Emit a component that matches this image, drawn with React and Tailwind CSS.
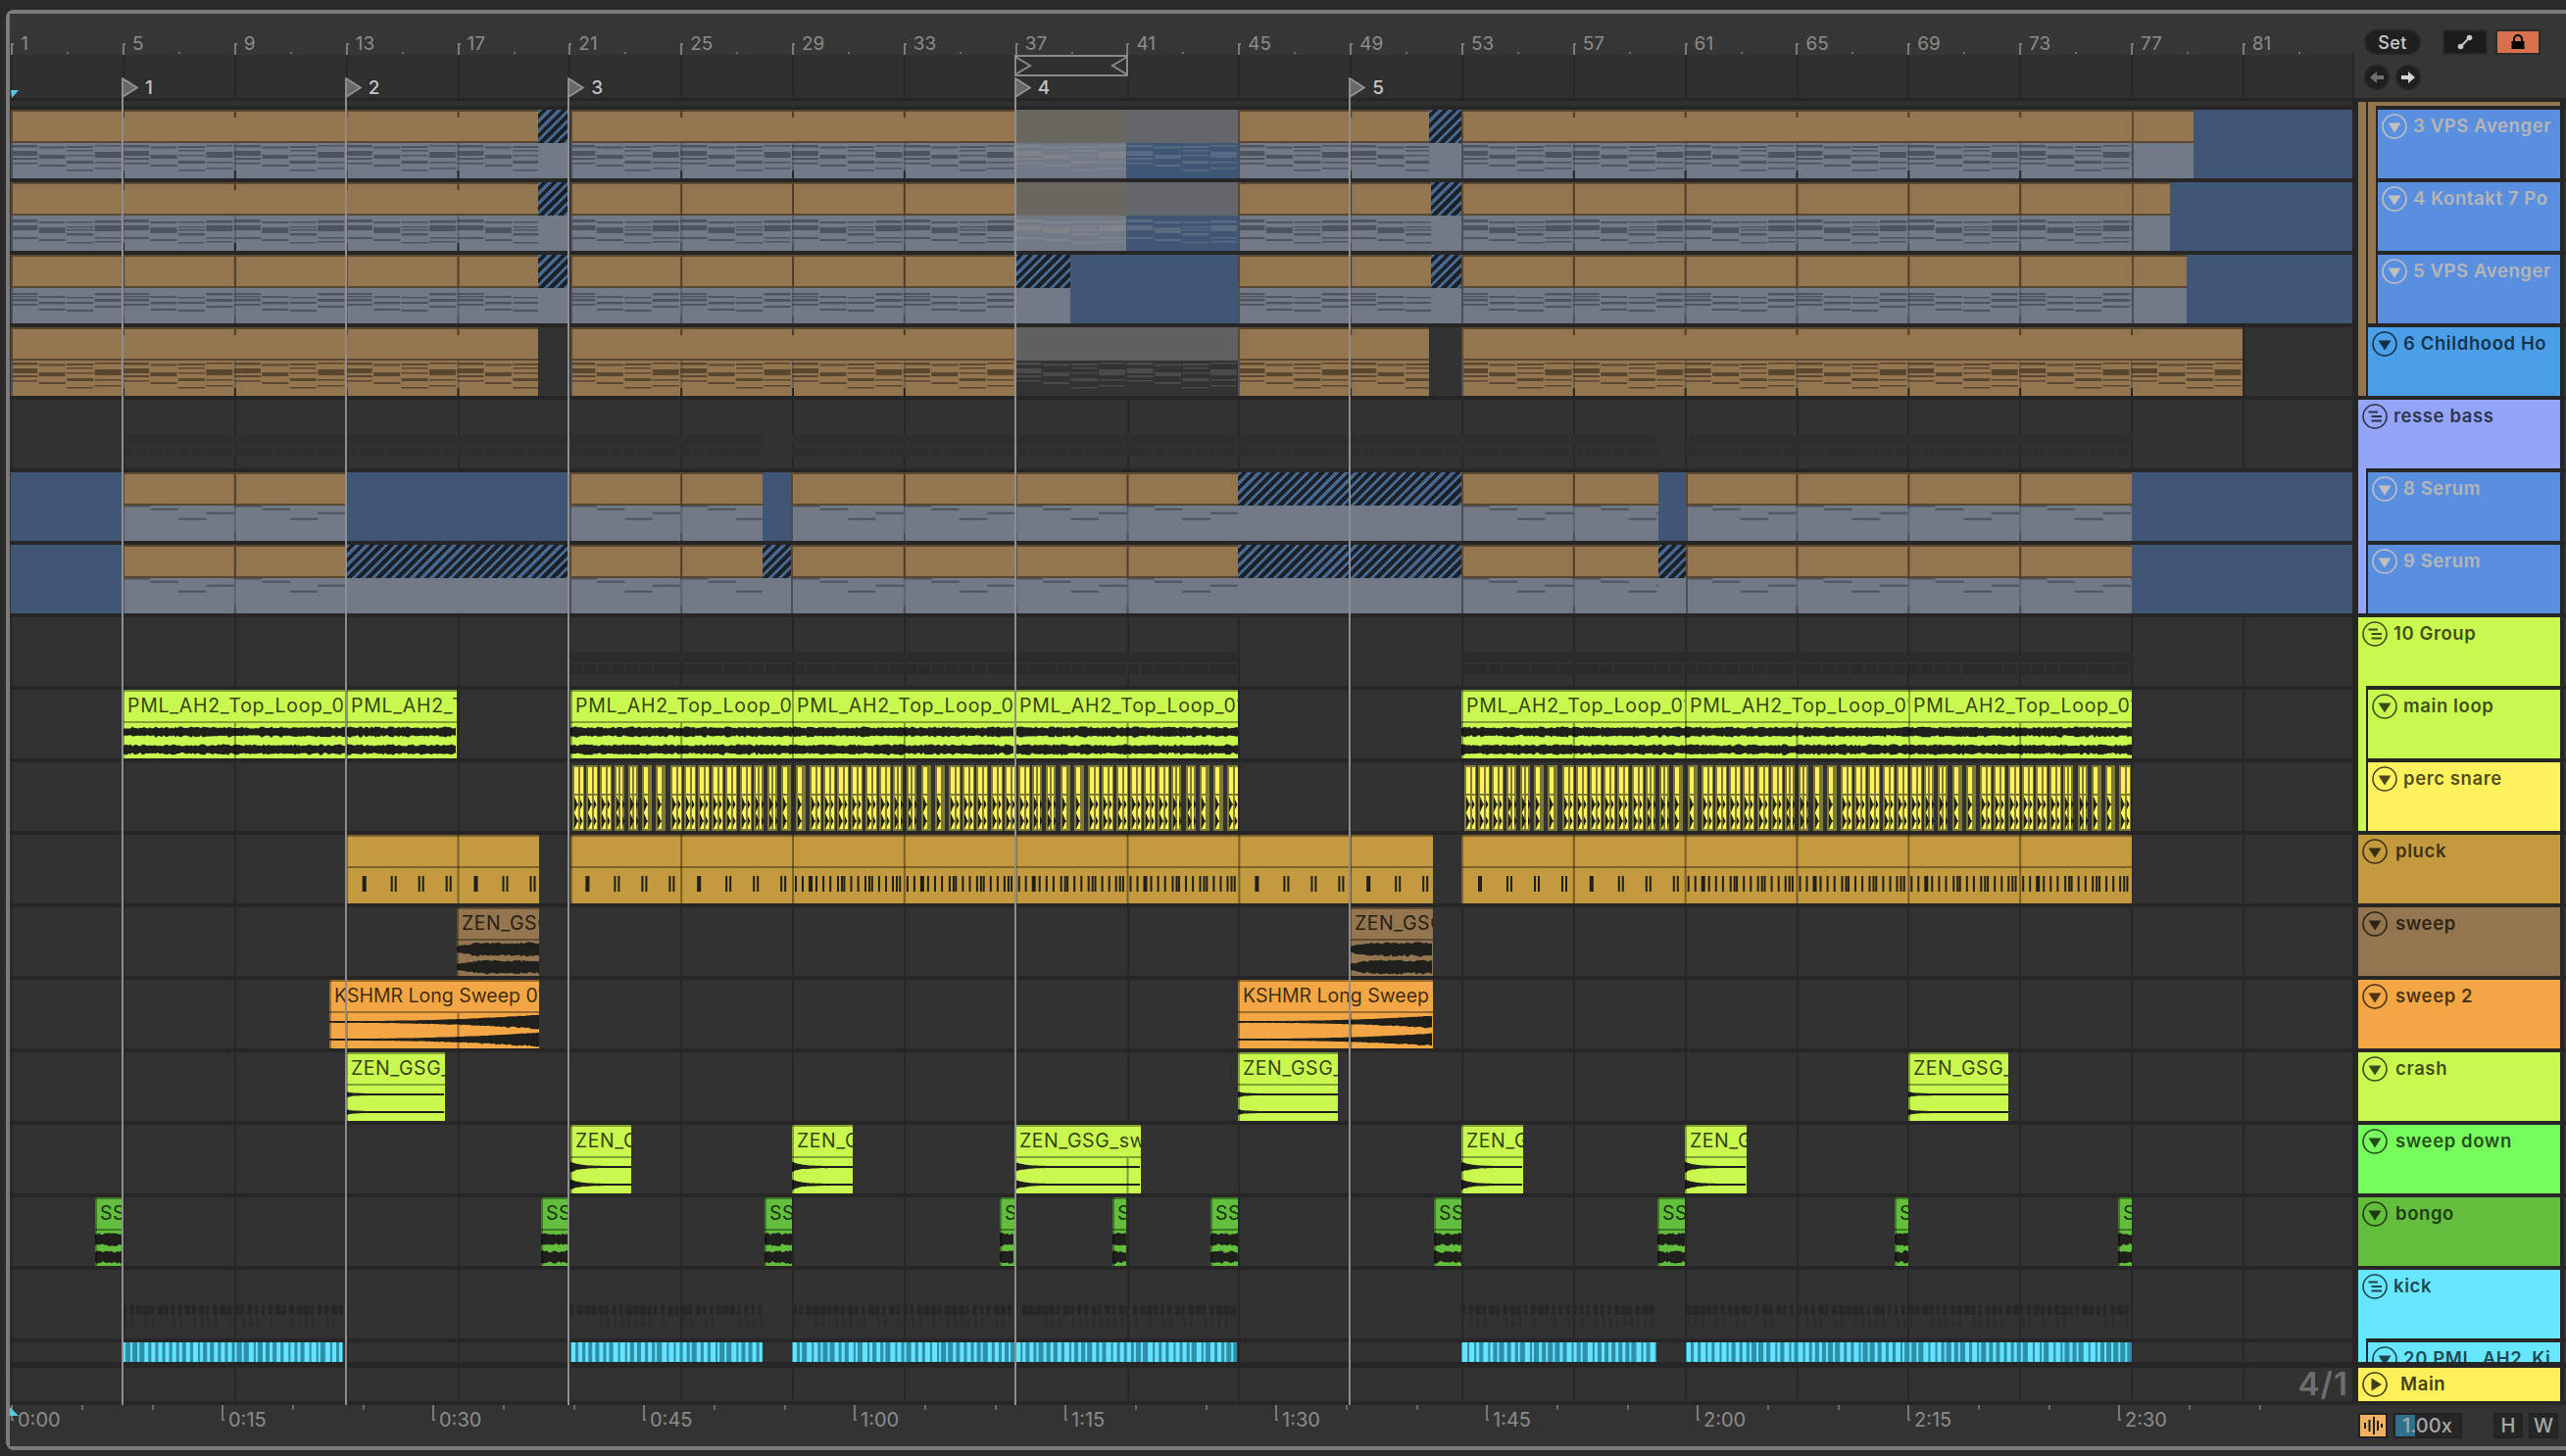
import React from 'react';

const X = (bar) => 11.2 + (bar - 1) * 28.458;
const L = (px) => px - 10;
const phrases = Array.from({ length: 21 }, (_, i) => X(1 + i * 4));
const rng = (seed) => {
  let s = seed * 7919 + 13;
  return () => {
    s = (s * 16807) % 2147483647;
    return (s % 1000) / 1000;
  };
};

const tops = {
  B: 'bg-[#93754f] border-y-2 border-[#5b4630]',
  H: 'bg-[repeating-linear-gradient(135deg,#476790_0px,#476790_3px,#1c2128_3px,#1c2128_7px)]',
  A: 'bg-[#6a6760]',
  C: 'bg-[#63666b]',
  L: 'bg-[#3f5675]',
  G: 'bg-[#616161]',
  N: '',
};
const bodies = { g: 'bg-[#727a87]', b: 'bg-[#3f5675]', r: 'bg-[#93754f]', d: 'bg-[#333333]' };

const chordsA = [
  [[2, 2.5], [8, 5], [15, 2], [20, 1.5]],
  [[3.5, 2], [12, 4], [22, 2]],
  [[3, 2], [7, 1.5], [12, 1.5], [18, 3], [27, 1.5]],
  [[2, 1.5], [9, 6], [19, 1.5], [25, 1.5]],
];
const chordsB = [
  [[4, 3], [10, 5], [22, 2]],
  [[6, 2], [12, 6], [24, 2]],
  [[6, 1.5], [11, 1.5], [14, 1.5], [18, 2.5], [27, 1.5]],
  [[5, 2.5], [10, 6], [22, 1.5], [26, 1.5]],
];
const chordsC = [
  [[5, 2], [8, 1.5], [11, 2.5], [16, 2]],
  [[8, 2], [14, 2.5], [21, 2]],
  [[9, 1.5], [14, 2], [22, 2]],
  [[5, 2.5], [11, 3], [18, 2]],
];
const chordsBass = [[[0, 1.5]], [[2.7, 2]], [[12.7, 2]], [[6.7, 2]]];

function notePath(x0, x1, chords) {
  let d = '';
  const step = 28.458;
  for (let i = 0; i < 84; i++) {
    const cx = X(1) + i * step;
    if (cx + step < x0 || cx > x1) continue;
    const bass = chords === chordsBass;
    const w = bass ? step : step - 1.5;
    chords[i % 4].forEach(([y, h]) => {
      d += `M${(cx - x0).toFixed(1)} ${y}h${w.toFixed(1)}v${h}h-${w.toFixed(1)}z`;
    });
  }
  return d;
}

function Seg({ x0, x1, top, body, notes, faded, mode }) {
  const w = x1 - x0;
  let color = '#4e545e';
  if (body === 'r') color = '#5b4630';
  if (body === 'd') color = '#4a4a4a';
  if (faded && body === 'g') color = '#80838a';
  if (faded && body === 'b') color = '#5a6a80';
  const lines = phrases.filter((p) => p > x0 + 3 && p < x1 - 3);
  const showLines = top === 'B';
  return (
    <div className="absolute top-0 h-[70px] overflow-hidden" style={{ left: L(x0), width: w }}>
      <div className={`h-[34px] ${tops[top]}`} />
      <div className={`h-[36px] ${bodies[body]}`}>
        {notes && (
          <svg width={w} height={36} className="block">
            <path d={notePath(x0, x1, notes)} fill={color} />
          </svg>
        )}
      </div>
      {showLines && (
        <svg width={w} height={70} className="absolute left-0 top-0">
          <rect x={0} y={0} width={2} height={34} fill="#5b4630" />
          <rect x={0} y={34} width={2} height={36} fill="#4a4f58" />
          {lines.map((p) => {
            const full = mode === 'line' || (mode === 'mix' && p > 582);
            return (
              <g key={p}>
                <rect x={p - x0} y={2} width={2} height={full ? 32 : 6} fill="#4f3d2a" />
                <rect x={p - x0} y={34} width={2} height={28} fill="#30384a" fillOpacity="0.35" />
                <rect x={p - x0} y={62} width={2} height={8} fill={full ? '#4a4f58' : '#262626'} />
              </g>
            );
          })}
        </svg>
      )}
    </div>
  );
}

function wavePath(w, cy, ampFn, seed, jitter) {
  const r = rng(seed);
  const upper = [];
  const lower = [];
  for (let x = 0; x <= w; x += 2) {
    const a = ampFn(x / w, x) * (1 - jitter + r() * jitter * 2);
    upper.push(`${x} ${(cy - a).toFixed(1)}`);
    lower.unshift(`${x} ${(cy + a * (0.85 + r() * 0.25)).toFixed(1)}`);
  }
  return `M${upper.join('L')}L${lower.join('L')}z`;
}

const waves = {
  loop: { amp: () => 4.5, jitter: 0.24 },
  sweep: { amp: (t, x) => Math.min(6.5, 3 + x / 6), jitter: 0.16 },
  kshmr: { amp: (t, x) => 0.9 + Math.pow(x / 214, 2.4) * 6.5, jitter: 0.05 },
  crash: { amp: (t, x) => 1 + 2 * Math.exp(-x / 7), jitter: 0 },
  down: { amp: (t, x) => 1 + 4.5 * Math.exp(-x / 9), jitter: 0 },
  bongo: { amp: () => 5.6, jitter: 0.24 },
};

function Clip({ x0, x1, title, bg, wave, seed = 1, ticks, tracking = 'tracking-[0.55px]' }) {
  const w = x1 - x0;
  const spec = waves[wave];
  const bars = phrases.filter((p) => p > x0 + 3 && p < x1 - 3);
  return (
    <div className={`absolute top-0 h-[70px] overflow-hidden ${bg}`} style={{ left: L(x0), width: w }}>
      <div className={`h-[34px] border-y-2 border-black/35 pl-[5px] text-[19.5px] leading-[29px] text-black/75 whitespace-nowrap overflow-hidden ${tracking}`}>
        {title}
      </div>
      <svg width={w} height={36} className="block">
        {spec && (
          <>
            <path d={wavePath(w, 9, spec.amp, seed, spec.jitter)} fill="#1f1f1c" />
            <path d={wavePath(w, 27, spec.amp, seed + 5, spec.jitter)} fill="#1f1f1c" />
          </>
        )}
        {ticks && <path d={ticks} fill="#1f1f1c" />}
      </svg>
      <svg width={w} height={70} className="absolute left-0 top-0">
        <rect x={0} y={0} width={2} height={70} fill="#000" fillOpacity="0.35" />
        {bars.map((p) => (
          <rect key={p} x={p - x0} y={ticks ? 0 : 34} width={2} height={ticks ? 70 : 36} fill="#000" fillOpacity="0.38" />
        ))}
      </svg>
    </div>
  );
}

function pluckTicks(x0, x1) {
  let d = '';
  const put = (x, wd) => {
    if (x > x0 && x + wd < x1) d += `M${(x - x0).toFixed(1)} 8h${wd}v16h-${wd}z`;
  };
  phrases.forEach((p) => {
    const dense = (p >= X(29) && p < X(45)) || p >= X(61);
    put(p + 17, 4);
    [46, 74, 102].forEach((o) => {
      put(p + o, 2);
      put(p + o + 4, 2);
    });
    if (dense) {
      for (let o = 24; o < 112; o += 7.1) {
        if ([46, 74, 102].some((v) => Math.abs(v - o) < 6)) continue;
        put(p + o, 2);
      }
      put(p + 3, 2);
      put(p + 10, 2);
    }
  });
  return d;
}

function Slices({ x0, x1 }) {
  const w = x1 - x0;
  const widths = [12, 12, 12, 10, 10, 10, 10, 12, 12, 12];
  const shapes = [];
  let tri = '';
  for (let i = 0, x = 3; x < w - 9; i++, x += 14.22) {
    const sw = widths[i % 10];
    const one = i % 10 === 5 || i % 10 === 6;
    const stripes = one ? [[2, 4]] : sw === 12 ? [[2, 4], [8, 3]] : [[2, 2], [6, 2]];
    const bx = Math.round(x);
    shapes.push(<rect key={`o${i}`} x={bx} y={3} width={sw} height={67} fill="#7c7a35" />);
    stripes.forEach(([o, sz], k) =>
      shapes.push(<rect key={`s${i}-${k}`} x={bx + o} y={5} width={sz} height={63} fill="#fff25c" />)
    );
    shapes.push(<rect key={`b${i}`} x={bx} y={32} width={sw} height={2} fill="#7c7a35" />);
    [43, 60].forEach((cy) => {
      tri += `M${bx + 2} ${cy - 8}L${bx + 5} ${cy - 1}L${bx + 6.5} ${cy}L${bx + 5} ${cy + 1}L${bx + 2} ${cy + 8}z`;
      if (!one) tri += `M${bx + 8} ${cy - 5}L${bx + 10.5} ${cy}L${bx + 8} ${cy + 5}z`;
    });
  }
  return (
    <svg width={w} height={70} className="absolute top-0" style={{ left: L(x0) }}>
      {shapes}
      <path d={tri} fill="#1f1f1c" />
    </svg>
  );
}

function GroupStrip({ x0, x1, kick, seed, dim }) {
  const w = x1 - x0;
  const r = rng(seed);
  const rects = [];
  const fill = dim ? '#2e2e2e' : '#2a2a2a';
  for (let x = 0; x < w; x += 7.1) {
    const sw = 2 + Math.floor(r() * 4);
    if (kick) {
      rects.push(<rect key={`a${x}`} x={x} y={36} width={sw + 1} height={10} fill="#272727" />);
      if (r() > 0.3) rects.push(<rect key={`b${x}`} x={x + 2} y={49} width={2} height={9} fill="#2a2a2a" />);
    } else if (Math.round(x / 7.1) % 2 === 0) {
      rects.push(<rect key={`c${x}`} x={x} y={48} width={r() > 0.7 ? 14 : 12} height={10} fill={fill} />);
    }
  }
  return (
    <svg width={w} height={70} className="absolute top-0" style={{ left: L(x0) }}>
      {!kick && <rect x={0} y={36} width={w} height={10} fill={dim ? '#2e2e2e' : '#2b2b2b'} />}
      {rects}
    </svg>
  );
}

function KickBars({ x0, x1 }) {
  const w = x1 - x0;
  const r = rng(x0);
  const rects = [];
  for (let x = 0; x < w; x += 7.1) {
    const sw = 2 + Math.floor(r() * 4);
    rects.push(<rect key={x} x={x + 1} y={0} width={sw} height={20} fill="#63e3ff" />);
  }
  return (
    <svg width={w} height={20} className="absolute top-0" style={{ left: L(x0) }}>
      <rect x={0} y={0} width={w} height={20} fill="#2f8ea8" />
      {rects}
    </svg>
  );
}

function GridLines() {
  return phrases.map((p) => (
    <div key={p} className="absolute top-0 bottom-0 w-[2px] bg-[#272727]" style={{ left: L(p) }} />
  ));
}

const midi = (xs, chords, mode) => xs.map((s) => ({ chords, mode, x0: s[0], x1: s[1], top: s[2], body: s[3], notes: s[4], faded: s[5] }));

const lanes = [
  midi(
    [[11, 549, 'B', 'g', 1], [549, 581, 'H', 'g'], [582, 1035, 'B', 'g', 1], [1035, 1149, 'A', 'g', 1, 1], [1149, 1263, 'C', 'b', 1, 1], [1263, 1458, 'B', 'g', 1], [1458, 1491, 'H', 'g'], [1491, 2175, 'B', 'g', 1], [2175, 2238, 'B', 'g'], [2238, 2400, 'L', 'b']],
    chordsA, 'tick'
  ),
  midi(
    [[11, 549, 'B', 'g', 1], [549, 581, 'H', 'g'], [582, 1035, 'B', 'g', 1], [1035, 1149, 'A', 'g', 1, 1], [1149, 1263, 'C', 'b', 1, 1], [1263, 1460, 'B', 'g', 1], [1460, 1491, 'H', 'g'], [1491, 2175, 'B', 'g', 1], [2175, 2214, 'B', 'g'], [2214, 2400, 'L', 'b']],
    chordsB, 'mix'
  ),
  midi(
    [[11, 549, 'B', 'g', 1], [549, 581, 'H', 'g'], [582, 1035, 'B', 'g', 1], [1035, 1092, 'H', 'g'], [1092, 1263, 'L', 'b'], [1263, 1460, 'B', 'g', 1], [1460, 1491, 'H', 'g'], [1491, 2175, 'B', 'g', 1], [2175, 2231, 'B', 'g'], [2231, 2400, 'L', 'b']],
    chordsC, 'line'
  ),
  midi(
    [[11, 549, 'B', 'r', 1], [582, 1035, 'B', 'r', 1], [1035, 1263, 'G', 'd', 1], [1263, 1458, 'B', 'r', 1], [1491, 2288, 'B', 'r', 1]],
    chordsA, 'tick'
  ),
  [],
  midi(
    [[11, 125, 'L', 'b'], [125, 353, 'B', 'g', 1], [353, 581, 'L', 'b'], [581, 778, 'B', 'g', 1], [778, 807, 'L', 'b'], [807, 1263, 'B', 'g', 1], [1263, 1491, 'H', 'g'], [1491, 1692, 'B', 'g', 1], [1692, 1720, 'L', 'b'], [1720, 2175, 'B', 'g', 1], [2175, 2400, 'L', 'b']],
    chordsBass, 'line'
  ),
  midi(
    [[11, 125, 'L', 'b'], [125, 353, 'B', 'g', 1], [353, 581, 'H', 'g'], [581, 778, 'B', 'g', 1], [778, 807, 'H', 'g'], [807, 1263, 'B', 'g', 1], [1263, 1491, 'H', 'g'], [1491, 1692, 'B', 'g', 1], [1692, 1720, 'H', 'g'], [1720, 2175, 'B', 'g', 1], [2175, 2400, 'L', 'b']],
    chordsBass, 'line'
  ),
];

const lime = 'bg-[#c9f94f]';
const audioRows = {
  8: [[125, 353], [353, 466], [582, 808], [808, 1035], [1035, 1263], [1491, 1719], [1719, 1947], [1947, 2175]].map((c) => ({ x0: c[0], x1: c[1], title: 'PML_AH2_Top_Loop_01', bg: lime, wave: 'loop', tracking: 'tracking-[0.72px]' })),
  10: [[353, 550], [582, 1462], [1491, 2175]].map((c) => ({ x0: c[0], x1: c[1], title: '', bg: 'bg-[#c49a3f]', ticks: pluckTicks(c[0], c[1]) })),
  11: [[466, 550], [1377, 1462]].map((c) => ({ x0: c[0], x1: c[1], title: 'ZEN_GSG_sweep', bg: 'bg-[#93754f]', wave: 'sweep' })),
  12: [[336, 550], [1263, 1462]].map((c) => ({ x0: c[0], x1: c[1], title: 'KSHMR Long Sweep 01', bg: 'bg-[#f2a744]', wave: 'kshmr', tracking: 'tracking-normal' })),
  13: [[353, 454], [1263, 1365], [1947, 2049]].map((c) => ({ x0: c[0], x1: c[1], title: 'ZEN_GSG_crash', bg: lime, wave: 'crash' })),
  14: [[582, 644], [808, 870], [1035, 1164], [1491, 1554], [1719, 1782]].map((c) => ({ x0: c[0], x1: c[1], title: 'ZEN_GSG_sweep', bg: lime, wave: 'down' })),
  15: [[97, 125], [552, 581], [780, 808], [1020, 1035], [1135, 1149], [1235, 1263], [1463, 1491], [1691, 1719], [1933, 1947], [2161, 2175]].map((c) => ({ x0: c[0], x1: c[1], title: 'SSS_bongo', bg: 'bg-[#62be3c]', wave: 'bongo' })),
};

const groupRows = {
  4: [[125, 778], [808, 1692], [1720, 2175]],
  7: [[582, 1263], [1491, 2175]],
};
const kickRanges = [[125, 350], [582, 778], [808, 1262], [1491, 1690], [1720, 2175]];

const tracks = [
  { label: '3 VPS Avenger', bg: 'bg-[#5a8fe0]', muted: true, strips: [{ c: 'bg-[#93754f]', on: true }, { c: 'bg-[#93754f]', on: true }] },
  { label: '4 Kontakt 7 Po', bg: 'bg-[#5a8fe0]', muted: true, strips: [{ c: 'bg-[#93754f]', on: true }, { c: 'bg-[#93754f]', on: true }] },
  { label: '5 VPS Avenger', bg: 'bg-[#5a8fe0]', muted: true, strips: [{ c: 'bg-[#93754f]', on: true }, { c: 'bg-[#93754f]', on: false }] },
  { label: '6 Childhood Ho', bg: 'bg-[#4a9fe8]', strips: [{ c: 'bg-[#93754f]', on: false }] },
  { label: 'resse bass', bg: 'bg-[#93a5f8]', group: true, tail: 'bg-[#93a5f8]' },
  { label: '8 Serum', bg: 'bg-[#5a8fe0]', muted: true, strips: [{ c: 'bg-[#93a5f8]', on: true }] },
  { label: '9 Serum', bg: 'bg-[#5a8fe0]', muted: true, strips: [{ c: 'bg-[#93a5f8]', on: false }] },
  { label: '10 Group', bg: lime, group: true, tail: lime },
  { label: 'main loop', bg: lime, strips: [{ c: lime, on: true }] },
  { label: 'perc snare', bg: 'bg-[#fff25c]', strips: [{ c: lime, on: false }] },
  { label: 'pluck', bg: 'bg-[#c49a3f]', nudge: true },
  { label: 'sweep', bg: 'bg-[#93754f]', nudge: true },
  { label: 'sweep 2', bg: 'bg-[#f2a744]', nudge: true },
  { label: 'crash', bg: lime, nudge: true },
  { label: 'sweep down', bg: 'bg-[#76fc5c]', nudge: true },
  { label: 'bongo', bg: 'bg-[#62be3c]', nudge: true },
  { label: 'kick', bg: 'bg-[#66e6ff]', group: true, tail: 'bg-[#66e6ff]' },
  { label: '20 PML_AH2_Ki', bg: 'bg-[#66e6ff]', strips: [{ c: 'bg-[#66e6ff]', on: true }] },
];

function TrackIcon({ kind, muted }) {
  const stroke = muted ? '#c0c0c0' : 'currentColor';
  return (
    <svg width="26" height="26" viewBox="0 0 26 26" className="shrink-0" fill="none" stroke={stroke} strokeWidth="1.6">
      <circle cx="13" cy="13" r="12" />
      {kind === 'group' && (
        <g strokeWidth="2">
          <path d="M6.5 8.5H16" />
          <path d="M9.5 13H20" />
          <path d="M9.5 17.5H20" />
        </g>
      )}
      {kind === 'fold' && <path d="M6.5 9.5H19.5L13 19.5Z" fill={stroke} stroke="none" />}
      {kind === 'play' && <path d="M9.5 6.5L20 13L9.5 19.5Z" fill={stroke} stroke="none" />}
    </svg>
  );
}

function TrackCell({ t }) {
  const strips = t.strips || [];
  return (
    <div className="flex h-[74px] w-[206px] flex-col">
      <div className="flex h-[70px]">
        {strips.map((s, i) => (
          <div key={i} className={`mr-[2px] w-[8px] ${s.c}`} />
        ))}
        <div
          className={`flex min-w-0 flex-1 items-start gap-[6px] overflow-hidden pl-[4px] pt-[4px] ${t.bg} ${t.muted ? 'text-[#b6b6b6]' : 'text-black/70'}`}
        >
          <TrackIcon kind={t.group ? 'group' : 'fold'} muted={t.muted} />
          <span className={`whitespace-nowrap text-[18.5px] font-semibold leading-[24px] tracking-[0.6px] ${t.nudge ? 'pl-[2px]' : ''}`}>{t.label}</span>
        </div>
      </div>
      <div className="flex h-[4px]">
        {t.tail && <div className={`w-[8px] ${t.tail}`} />}
        {strips.map((s, i) => (
          <div key={i} className={`mr-[2px] w-[8px] ${s.on ? s.c : ''}`} />
        ))}
      </div>
    </div>
  );
}

function Lane({ index }) {
  const kick = index === 16;
  return (
    <div className="relative h-[70px] w-[2390px] overflow-hidden bg-[#323232]">
      <GridLines />
      {(lanes[index] || []).map((s) => (
        <Seg key={s.x0} x0={s.x0} x1={s.x1} top={s.top} body={s.body} faded={s.faded} mode={s.mode} notes={s.notes ? s.chords : null} />
      ))}
      {(audioRows[index] || []).map((c, i) => (
        <Clip key={c.x0} {...c} seed={i + index + 1} />
      ))}
      {(groupRows[index] || []).map((r, i) => (
        <GroupStrip key={r[0]} x0={r[0]} x1={r[1]} seed={i + 3} dim={index === 4} />
      ))}
      {kick && kickRanges.map((r, i) => <GroupStrip key={r[0]} x0={r[0]} x1={r[1]} kick seed={i + 11} />)}
      {index === 9 && (
        <>
          <Slices x0={581} x1={1263} />
          <Slices x0={1491} x1={2175} />
        </>
      )}
      {index === 17 && kickRanges.map((r) => <KickBars key={r[0]} x0={r[0]} x1={r[1]} />)}
    </div>
  );
}

function BarRuler() {
  const bars = Array.from({ length: 21 }, (_, i) => 1 + i * 4);
  return (
    <div className="flex h-[42px] bg-[#363636] pl-[1.2px]">
      {bars.map((b) => (
        <div key={b} className="relative flex w-[113.83px] shrink-0">
          <div className="h-[12px] w-[2px] self-end bg-[#7a7a7a]" />
          <div className="absolute left-0 top-[30px] h-[2px] w-[3px] bg-[#7a7a7a]" />
          <span className="ml-[8px] mt-[21px] text-[19px] leading-[20px] text-[#8c8c8c]">{b}</span>
          <div className="absolute bottom-[1px] left-[57px] size-[2px] bg-[#6f6f6f]" />
        </div>
      ))}
    </div>
  );
}

const locators = [
  { bar: 5, n: 1 },
  { bar: 13, n: 2 },
  { bar: 21, n: 3 },
  { bar: 37, n: 4 },
  { bar: 49, n: 5 },
];

function LocatorLane() {
  return (
    <div className="relative h-[44px] bg-[#303030]">
      <GridLines />
      <div className="absolute top-[-2px] bottom-0 left-[2390px] w-[2px] bg-[#272727]" />
      <svg width="116" height="24" className="absolute top-0" style={{ left: L(X(37)) - 1 }}>
        <path d="M1 1H115V21H1Z M1 2L16 11L1 20 M115 2L100 11L115 20" fill="none" stroke="#8a8a8a" strokeWidth="2" />
      </svg>
      {locators.map((l) => (
        <div key={l.n} className="absolute top-[23px] flex items-center" style={{ left: L(X(l.bar)) - 1 }}>
          <svg width="18" height="21" className="block">
            <path d="M1 1L16 10.5L1 20Z" fill="#686868" stroke="#9a9a9a" strokeWidth="1.5" />
          </svg>
          <span className="ml-[5px] bg-[#2e2e2e] px-[1px] text-[19px] font-medium leading-[20px] text-[#c4c4c4]">{l.n}</span>
        </div>
      ))}
      <svg width="10" height="8" className="absolute left-0 top-[36px]">
        <path d="M1 0H9L2 8Z" fill="#58c6dc" />
      </svg>
    </div>
  );
}

function TimeRuler() {
  const labels = ['0:00', '0:15', '0:30', '0:45', '1:00', '1:15', '1:30', '1:45', '2:00', '2:15', '2:30'];
  return (
    <div className="relative flex h-[42px] w-[2390px] pl-[1px]">
      {labels.map((t) => (
        <div key={t} className="relative flex h-full w-[215px] shrink-0">
          <div className="h-[16px] w-[2px] bg-[#777777]" />
          <div className="absolute left-0 top-[14px] h-[2px] w-[3px] bg-[#777777]" />
          <span className="ml-[5px] mt-[5px] text-[20px] leading-[20px] text-[#8c8c8c]">{t}</span>
          <div className="absolute left-[72px] top-0 h-[5px] w-[2px] bg-[#6a6a6a]" />
          <div className="absolute left-[144px] top-0 h-[5px] w-[2px] bg-[#6a6a6a]" />
        </div>
      ))}
      <svg width="10" height="10" className="absolute left-0 top-[2px]">
        <path d="M0 0L9 9H0Z" fill="#58c6dc" />
      </svg>
    </div>
  );
}

function TopControls() {
  return (
    <div className="flex flex-1 flex-col gap-[10px] bg-[#363636] pl-[10px] pt-[16px]">
      <div className="flex items-center">
        <div className="flex h-[26px] w-[58px] items-center justify-center rounded-full border-2 border-[#262626] bg-[#1f1f1f] text-[18px] font-medium tracking-[0.4px] text-[#c8c8c8]">
          Set
        </div>
        <div className="ml-[22px] flex h-[26px] w-[46px] items-center justify-center border-2 border-[#2a2a2a] bg-[#1c1c1c]">
          <svg width="16" height="16" viewBox="0 0 16 16">
            <path d="M4 12L12 4" stroke="#c8c8c8" strokeWidth="2" />
            <circle cx="3.5" cy="12.5" r="2.8" fill="#c8c8c8" />
            <circle cx="12.5" cy="3.5" r="2.8" fill="#c8c8c8" />
          </svg>
        </div>
        <div className="ml-[8px] flex h-[26px] w-[46px] items-center justify-center border-2 border-[#2a2a2a] bg-[#d97150]">
          <svg width="16" height="16" viewBox="0 0 16 16">
            <path d="M4 7V5a4 4 0 0 1 8 0v2" fill="none" stroke="#000" strokeWidth="2" />
            <rect x="1.5" y="7" width="13" height="8" fill="#000" />
          </svg>
        </div>
      </div>
      <div className="flex gap-[6px]">
        <div className="flex size-[26px] items-center justify-center rounded-full border-2 border-[#262626] bg-[#1f1f1f]">
          <svg width="16" height="14" viewBox="0 0 16 14">
            <path d="M1 7L8 1V5H15V9H8V13Z" fill="#6f6f6f" />
          </svg>
        </div>
        <div className="flex size-[26px] items-center justify-center rounded-full border-2 border-[#262626] bg-[#1f1f1f]">
          <svg width="16" height="14" viewBox="0 0 16 14">
            <path d="M15 7L8 1V5H1V9H8V13Z" fill="#d4d4d4" />
          </svg>
        </div>
      </div>
    </div>
  );
}

function BottomControls() {
  return (
    <div className="flex h-[42px] flex-1 items-start pt-[8px] text-[#a8a8a8]">
      <div className="flex h-[26px] w-[30px] items-center justify-center border-2 border-[#222222] bg-[#f2b060]">
        <svg width="22" height="18" viewBox="0 0 22 18" stroke="#1f1f1f" strokeWidth="2">
          <path d="M3 6V12M7.5 3V15M12 0V18M16 4V14M20 7V11" />
        </svg>
      </div>
      <div className="relative ml-[6px] flex h-[26px] w-[70px] items-center border-2 border-[#222222] bg-[#262626] pl-[7px] text-[20px] font-medium">
        <div className="absolute bottom-0 left-0 top-0 w-[20px] bg-[#31708a]" />
        <span className="relative">1.00x</span>
      </div>
      <div className="ml-[32px] flex h-[26px] w-[30px] items-center justify-center border-2 border-[#222222] bg-[#262626] text-[20px] font-medium">H</div>
      <div className="ml-[6px] flex h-[26px] w-[30px] items-center justify-center border-2 border-[#222222] bg-[#262626] text-[20px] font-medium">W</div>
    </div>
  );
}

export default function App() {
  return (
    <div className="h-[1486px] w-[2618px] overflow-hidden bg-[#2a2a2a] pl-[6px] pt-[10px] font-[Inter,sans-serif]">
      <div className="relative h-[1470px] w-[2620px] rounded-l-[8px] border-y-4 border-l-4 border-[#7b7b7b] bg-[#333333]">
        <div className="flex h-[86px]">
          <div className="w-[2392px]">
            <BarRuler />
            <LocatorLane />
          </div>
          <TopControls />
        </div>

        <div className="flex h-[12px] flex-col bg-[#262626]">
          <div className="h-[3px]" />
          <div className="flex h-[5px]">
            <div className="w-[2390px] bg-[#2f2f2f]" />
          </div>
        </div>
        <div className="absolute left-[2396px] top-[90px] h-[8px] w-[8px] bg-[#93754f]" />
        <div className="absolute left-[2406px] top-[90px] h-[4px] w-[196px] bg-[#93754f]" />
        <div className="absolute left-[2406px] top-[94px] h-[4px] w-[8px] bg-[#93754f]" />

        <div className="h-[1278px] overflow-hidden bg-[#262626]">
          {tracks.map((t, i) => (
            <div key={t.label} className="flex h-[74px]">
              <Lane index={i} />
              <div className="w-[6px]" />
              <TrackCell t={t} />
              <div className="w-[4px]" />
              <div className="h-[70px] flex-1 bg-[#333333]" />
            </div>
          ))}
        </div>

        <div className="h-[6px] bg-[#262626]" />

        <div className="flex h-[34px] bg-[#262626]">
          <div className="relative flex w-[2390px] items-center justify-end bg-[#323232] pr-[4px]">
            <GridLines />
            <span className="relative text-[33px] font-semibold tracking-[1px] text-[#6e6e6e]">4/1</span>
          </div>
          <div className="w-[6px]" />
          <div className="flex w-[206px] items-center gap-[13px] bg-[#fff05a] pl-[4px] text-black/75">
            <TrackIcon kind="play" />
            <span className="text-[18.5px] font-semibold tracking-[0.6px]">Main</span>
          </div>
          <div className="w-[4px]" />
          <div className="flex-1 bg-[#333333]" />
        </div>

        <div className="h-[4px] bg-[#262626]" />

        <div className="flex h-[42px] bg-[#333333]">
          <TimeRuler />
          <div className="w-[6px]" />
          <BottomControls />
        </div>

        {locators.map((l) => (
          <div key={l.n} className="absolute top-[66px] h-[1354px] w-[2px] bg-[#8e8e8e]" style={{ left: L(X(l.bar)) - 1 }} />
        ))}
      </div>
    </div>
  );
}
